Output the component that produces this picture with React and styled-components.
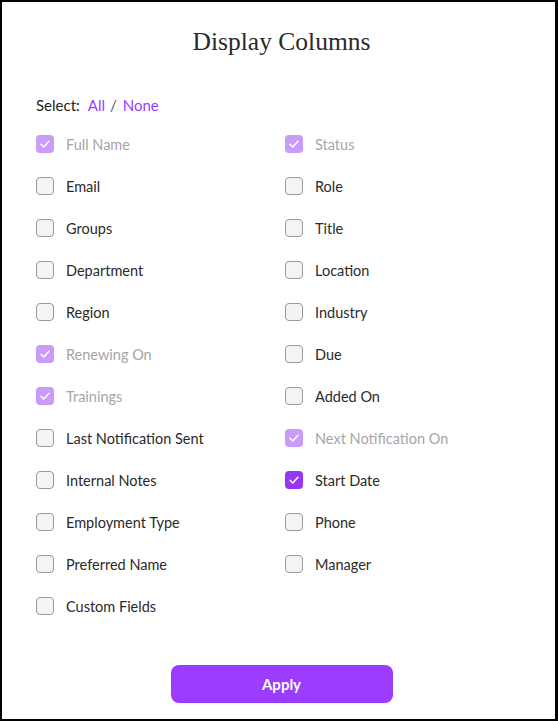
import React from "react";
import styled, { createGlobalStyle } from "styled-components";

const Global = createGlobalStyle`
  html, body { margin: 0; padding: 0; background: #fff; }
  * { box-sizing: border-box; }
`;

const Frame = styled.div`
  width: 558px;
  height: 721px;
  border: 2px solid #000;
  border-right-width: 3px;
  background: #fff;
  padding: 25px 0 0 0;
  display: flex;
  flex-direction: column;
  font-family: Lato, "Open Sans", sans-serif;
  color: #222;
`;

const Title = styled.h1`
  margin: 0;
  font-family: "Liberation Serif", serif;
  font-weight: 400;
  font-size: 25.5px;
  line-height: 30px;
  text-align: center;
  color: #2a2a2a;
  padding-left: 6px;
`;

const SelectRow = styled.div`
  margin-top: 38px;
  padding-left: 34px;
  font-size: 15px;
  line-height: 20px;
  color: #222;
`;

const Label = styled.span`
  margin-right: 8px;
`;

const Link = styled.span`
  color: #9b3cff;
  cursor: pointer;
`;

const Sep = styled.span`
  color: #555;
  margin: 0 6px 0 5px;
`;

const Grid = styled.div`
  margin-top: 8px;
  padding-left: 34px;
  display: grid;
  grid-template-columns: 249px 1fr;
  grid-auto-rows: 42px;
`;

const Item = styled.label`
  display: flex;
  align-items: center;
  gap: 12px;
  font-size: 14.5px;
  color: ${(p) => (p.$disabled ? "#a6a6a6" : "#2a2a2a")};
`;

const Box = styled.span`
  width: 18px;
  height: 18px;
  border-radius: 4px;
  display: flex;
  align-items: center;
  justify-content: center;
  flex: none;
  background: ${(p) =>
    p.$checked ? (p.$disabled ? "#c99bfa" : "#9437f5") : "#f4f4f4"};
  border: ${(p) => (p.$checked ? "none" : "1px solid #9a9a9a")};
`;

const Footer = styled.div`
  margin-top: 38px;
  display: flex;
  justify-content: center;
  padding-left: 6px;
`;

const Button = styled.button`
  width: 222px;
  height: 38px;
  border: none;
  border-radius: 8px;
  background: #9b3cff;
  color: #fff;
  font-family: Lato, sans-serif;
  font-weight: 700;
  font-size: 15px;
`;

const Check = () => (
  <svg width="12" height="12" viewBox="0 0 12 12" fill="none">
    <path d="M2 6.3L4.8 9L10 3.2" stroke="#fff" strokeWidth="1.5" strokeLinecap="round" strokeLinejoin="round" />
  </svg>
);

const items = [
  ["Full Name", "cd"],
  ["Status", "cd"],
  ["Email", ""],
  ["Role", ""],
  ["Groups", ""],
  ["Title", ""],
  ["Department", ""],
  ["Location", ""],
  ["Region", ""],
  ["Industry", ""],
  ["Renewing On", "cd"],
  ["Due", ""],
  ["Trainings", "cd"],
  ["Added On", ""],
  ["Last Notification Sent", ""],
  ["Next Notification On", "cd"],
  ["Internal Notes", ""],
  ["Start Date", "c"],
  ["Employment Type", ""],
  ["Phone", ""],
  ["Preferred Name", ""],
  ["Manager", ""],
  ["Custom Fields", ""],
];

export default function App() {
  return (
    <>
      <Global />
      <Frame>
        <Title>Display Columns</Title>
        <SelectRow>
          <Label>Select:</Label>
          <Link>All</Link>
          <Sep>/</Sep>
          <Link>None</Link>
        </SelectRow>
        <Grid>
          {items.map(([name, flags]) => {
            const checked = flags.includes("c");
            const disabled = flags.includes("d");
            return (
              <Item key={name} $disabled={disabled}>
                <Box $checked={checked} $disabled={disabled}>
                  {checked && <Check />}
                </Box>
                {name}
              </Item>
            );
          })}
        </Grid>
        <Footer>
          <Button>Apply</Button>
        </Footer>
      </Frame>
    </>
  );
}
